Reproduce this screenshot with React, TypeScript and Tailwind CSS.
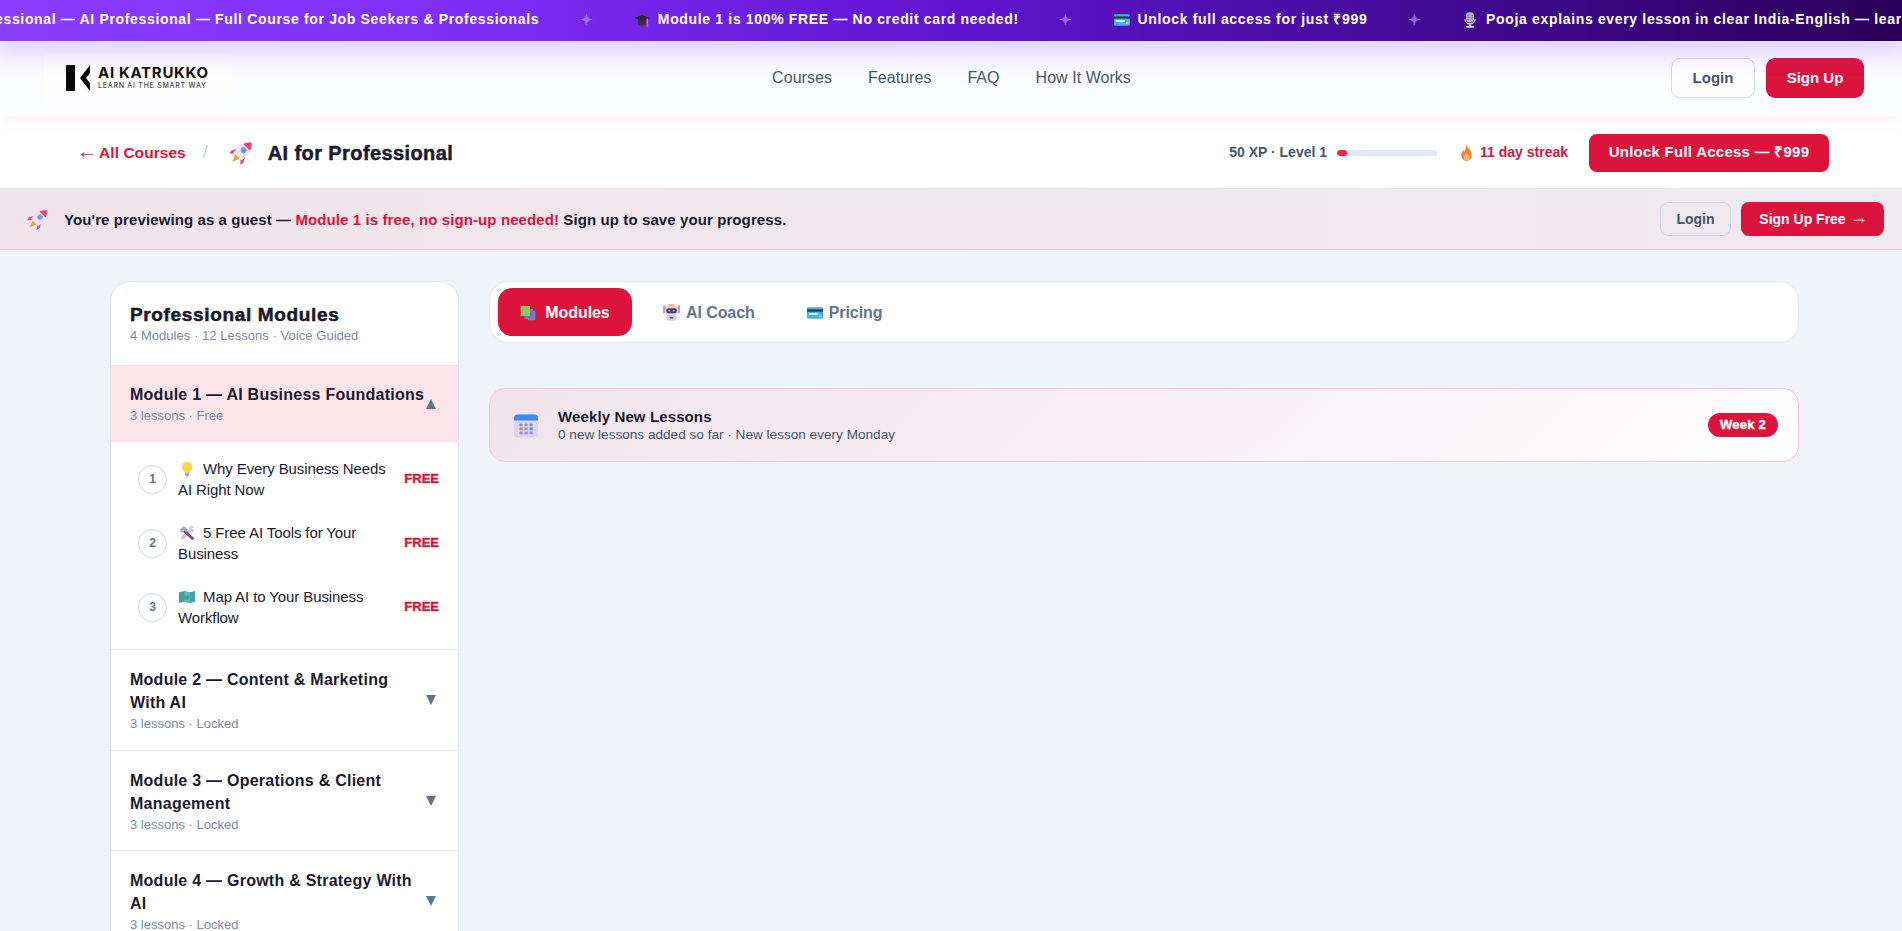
import React from "react";

type IconProps = { className?: string };

const Rocket = ({ className = "w-6 h-6" }: IconProps) => (
  <svg viewBox="0 0 24 24" className={className}>
    <g transform="rotate(45 12 12)">
      <path d="M7 12L3.800 17.500l.7 3.500L8 17.500z" fill="#f43f6e" />
      <path d="M17 12l3.200 5.500-.7 3.500L16 17.500z" fill="#f43f6e" />
      <path d="M9 17h6l-3 7.500z" fill="#f59e2e" />
      <path d="M12-1.500C17.500 3 18.800 9 17.500 17.500h-11C5.200 9 6.500 3 12-1.500z" fill="#ebe3ee" />
      <path d="M12-1.500C14.200.3 15.800 2.500 16.700 5H7.300C8.200 2.500 9.800.3 12-1.500z" fill="#f43f6e" />
      <circle cx="12" cy="9" r="3.100" fill="#b7a9d6" />
      <circle cx="12" cy="9" r="2.200" fill="#5b9bf0" />
    </g>
  </svg>
);

const Cap = ({ className = "w-4 h-4" }: IconProps) => (
  <svg viewBox="0 0 24 24" className={className}>
    <path d="M6 11v7c2 3 10 3 12 0v-7z" fill="#3b3340" />
    <path d="M1 9l11-5 11 5-11 5z" fill="#2a2530" />
    <path d="M20 10v8" stroke="#e88a2c" strokeWidth="2" />
    <rect x="18.800" y="17" width="2.400" height="6" fill="#e8642c" />
  </svg>
);

const Card = ({ className = "w-4 h-4" }: IconProps) => (
  <svg viewBox="0 0 24 24" className={className}>
    <rect x="0" y="3.500" width="24" height="17" rx="2" fill="#38b6e8" />
    <rect x="0" y="6.500" width="24" height="3.500" fill="#2b3a55" />
    <rect x="2.500" y="12" width="14" height="3" fill="#d9f1fb" />
    <rect x="18" y="15.500" width="4" height="2.500" fill="#f6c445" />
  </svg>
);

const Mic = ({ className = "w-4 h-4" }: IconProps) => (
  <svg viewBox="0 0 24 24" className={className}>
    <rect x="6" y="0.500" width="12" height="15" rx="5.500" fill="#b6b3bd" />
    <path d="M6.500 5h11M6.500 8h11M6.500 11h11" stroke="#85828f" strokeWidth="1" />
    <path d="M4.500 11c0 9 15 9 15 0" fill="none" stroke="#c9c6cf" strokeWidth="2.200" />
    <rect x="10.500" y="17" width="3" height="4" fill="#c9c6cf" />
    <rect x="6" y="20.500" width="12" height="3" rx="1" fill="#d8d6dc" />
  </svg>
);

const Flame = ({ className = "w-4 h-4" }: IconProps) => (
  <svg viewBox="0 0 16 20" className={className}>
    <path d="M8 0c.5 3.500 6.500 6.500 6.500 12.500C14.500 16.800 11.500 20 8 20s-6.500-3.200-6.500-7.500C1.500 9.500 3 8 4 6.500c.5 1 1 1.800 1.500 2C6.500 6 7.500 3 8 0z" fill="#f0803c" />
    <path d="M8 9c.5 2 3.500 3.500 3.500 6.500 0 2.500-1.500 4.500-3.500 4.500s-3.500-2-3.500-4.500C4.500 13 7.500 12 8 9z" fill="#fbbf5c" />
  </svg>
);

const Bulb = ({ className = "w-4 h-4" }: IconProps) => (
  <svg viewBox="0 0 24 24" className={className}>
    <path d="M12 1a8 8 0 0 0-4.500 14.600c.8.700 1 1.400 1 2.400h7c0-1 .2-1.700 1-2.400A8 8 0 0 0 12 1z" fill="#fcd34d" />
    <path d="M8 3.500A8 8 0 0 0 7.500 15.600" fill="none" stroke="#fde9a8" strokeWidth="1.500" />
    <rect x="8.800" y="18" width="6.400" height="3.500" rx="1" fill="#a9a4b5" />
    <rect x="10" y="21.500" width="4" height="1.500" rx=".7" fill="#6f6a7a" />
  </svg>
);

const Tools = ({ className = "w-4 h-4" }: IconProps) => (
  <svg viewBox="0 0 24 24" className={className}>
    <path d="M18 4l3 3L8 21l-5 1 1-5z" fill="#c9c4d1" />
    <path d="M9 7l14 13-3 3L6 10z" fill="#7a4a6a" />
    <path d="M1 7l6-5 6 4-2 4-4-2-3 4z" fill="#aaa5b4" />
    <path d="M15 4c2-3 6-3 8-1l-4 3 1 2 3-2c.5 3-2 6-5 5z" fill="#d4d0da" />
  </svg>
);

const MapIcon = ({ className = "w-4 h-4" }: IconProps) => (
  <svg viewBox="0 0 24 24" className={className}>
    <path d="M0 5l8-2 8 2 8-2v16l-8 2-8-2-8 2z" fill="#3a9fc4" />
    <path d="M8 3l8 2v16l-8-2z" fill="#5cb8d6" />
    <path d="M2 9l5-2 3 3 4-1 2 4-3 4-4-2-4 1z" fill="#4ca56f" />
    <path d="M17 8l5-1v6l-4 2z" fill="#4ca56f" />
  </svg>
);

const Books = ({ className = "w-4 h-4" }: IconProps) => (
  <svg viewBox="0 0 24 24" className={className}>
    <rect x="12" y="9" width="11" height="14" fill="#38a0dc" />
    <rect x="6.500" y="6" width="13" height="15" fill="#8f6bb8" />
    <rect x="1" y="1.500" width="14" height="15" fill="#82cf5b" />
  </svg>
);

const Robot = ({ className = "w-4 h-4" }: IconProps) => (
  <svg viewBox="0 0 24 24" className={className}>
    <rect x="0.500" y="2" width="2" height="11" fill="#ef4f7c" />
    <rect x="21.500" y="2" width="2" height="11" fill="#ef4f7c" />
    <rect x="8" y="0.500" width="8" height="3" rx="1" fill="#f2b33d" />
    <rect x="2.500" y="3" width="19" height="12" rx="4" fill="#d9d2e6" />
    <rect x="4.500" y="6" width="15" height="7" rx="3" fill="#3b3f5c" />
    <circle cx="9" cy="9.500" r="1.500" fill="#5fc2f5" />
    <circle cx="15" cy="9.500" r="1.500" fill="#5fc2f5" />
    <rect x="5" y="15.500" width="14" height="8" rx="3" fill="#d7c7ee" />
    <rect x="9.500" y="18.500" width="5" height="1.800" rx=".9" fill="#55506a" />
  </svg>
);

const Calendar = ({ className = "w-6 h-6" }: IconProps) => (
  <svg viewBox="0 0 24 24" className={className}>
    <rect x="0" y="1" width="24" height="23" rx="3.500" fill="#ded3f0" />
    <path d="M0 7V4.500A3.500 3.500 0 0 1 3.500 1h17A3.500 3.500 0 0 1 24 4.500V7z" fill="#3f86ee" />
    {[5.500, 10.500, 15.500].flatMap((x) =>
      [10, 14, 18].map((y) => (
        <rect key={`${x}-${y}`} x={x} y={y} width="3.200" height="2.800" rx=".5" fill={x === 15.500 && y === 14 ? "#3f8ee8" : "#9b93ae"} />
      ))
    )}
  </svg>
);

const Star = () => <span className="mx-[40.500px] text-[15px] text-[#b48cf5] opacity-70 leading-none">✦</span>;

const Item = ({ icon, text }: { icon?: React.ReactNode; text: string }) => (
  <span className="flex items-center gap-[8px]">
    {icon}
    <span>{text}</span>
  </span>
);

const Lesson = ({ n, icon, a, b }: { n: number; icon: React.ReactNode; a: string; b: string }) => (
  <div className="flex items-center h-[64px] pl-[27px] pr-[19px]">
    <div className="w-[29px] h-[29px] rounded-full border border-[#cbd5e1] flex items-center justify-center text-[12px] font-bold text-[#64748b] shrink-0">{n}</div>
    <div className="ml-[11px] flex-1 text-[15px] leading-[21px] tracking-[-0.1px] text-[#1a1a2e]">
      <div className="flex items-center">
        <span className="ml-[1px] mr-[8px]">{icon}</span>
        {a}
      </div>
      <div>{b}</div>
    </div>
    <span className="text-[13px] font-bold text-[#dc143c] [-webkit-text-stroke:0.4px_#dc143c]">FREE</span>
  </div>
);

const Mod = ({ a, b }: { a: string; b: string }) => (
  <div className="relative border-t border-[#e2e8f0] pt-[18px] pl-[19px] pr-[20px] h-[100.500px]">
    <div className="text-[16px] font-bold leading-[23px] tracking-[0.25px] text-[#1a1a2e]">
      {a}
      <br />
      {b}
    </div>
    <div className="text-[13px] leading-[18px] mt-[1px] text-[#7c8aa0]">3 lessons · Locked</div>
    <span className="absolute right-[22px] top-[45px] w-0 h-0 border-l-[5px] border-r-[5px] border-t-[10px] border-l-transparent border-r-transparent border-t-[#64748b]" />
  </div>
);

export default function App() {
  return (
    <div className="h-[931px] overflow-hidden bg-[#f0f3f8] font-['Liberation_Sans',Arial,sans-serif] text-[#1a1a2e]">
      <div className="relative z-30 h-[41px] pb-[2px] overflow-hidden bg-[linear-gradient(90deg,#8a3cff_0%,#7c2ef5_25%,#5f14cf_50%,#430a96_75%,#2a0058_100%)] text-white text-[14px] font-bold tracking-[0.66px] flex items-center whitespace-nowrap">
        <div className="flex items-center -ml-[5px] shrink-0">
          <Item text="essional — AI Professional — Full Course for Job Seekers & Professionals" />
          <Star />
          <Item icon={<Cap className="w-4 h-4" />} text="Module 1 is 100% FREE — No credit card needed!" />
          <Star />
          <Item icon={<Card className="w-4 h-4" />} text="Unlock full access for just ₹999" />
          <Star />
          <Item icon={<Mic className="w-4 h-4" />} text="Pooja explains every lesson in clear India-English — learn anywhere" />
        </div>
      </div>
      <div className="relative z-20 h-0 shadow-[0_0_26px_7px_rgba(124,58,237,0.42)]" />

      <header className="relative z-10 h-[75px] pb-[1px] flex items-center justify-between pl-[44px] pr-[38px] bg-[#fbfcff] shadow-[0_4px_16px_rgba(220,20,60,0.06)]">
        <div className="relative z-20 w-[188px] h-[51px] bg-white/70 flex items-center pl-[22px] gap-[7px]">
          <svg viewBox="0 0 25 26" className="w-[25px] h-[26px]">
            <rect x="0" y="0" width="9" height="26" fill="#0a0a0a" />
            <path d="M14 13L24 0v8l-4 5 4 5v8z" fill="#0a0a0a" />
          </svg>
          <div className="flex flex-col">
            <span className="font-['Inter',sans-serif] text-[15px] font-bold leading-[15px] tracking-[0.7px] text-[#111]">AI KATRUKKO</span>
            <span className="font-['Inter',sans-serif] text-[7px] font-medium tracking-[0.75px] leading-[12px] text-[#444]">LEARN AI THE SMART WAY</span>
          </div>
        </div>
        <nav className="flex items-center gap-[36px] text-[16px] tracking-[0.04px] text-[#4b5563]">
          <span>Courses</span>
          <span>Features</span>
          <span>FAQ</span>
          <span>How It Works</span>
        </nav>
        <div className="flex items-center gap-[11px] text-[15px] font-bold">
          <span className="w-[84px] h-[40px] flex items-center justify-center rounded-[9px] border border-[#d4dae8] text-[#475569] bg-white/70">Login</span>
          <span className="w-[98px] h-[40px] flex items-center justify-center rounded-[9px] bg-[#dc143c] text-white">Sign Up</span>
        </div>
      </header>

      <div className="relative h-[73px] pt-[1px] bg-white border-b border-[#e2e8f0] flex items-center pl-[77px] pr-[73px]">
        <span className="text-[15.500px] font-bold tracking-[0.05px] text-[#dc143c] flex items-center gap-[2px]">
          <span className="text-[20px] leading-none font-normal pb-[4px]">←</span>All Courses
        </span>
        <span className="ml-[17px] text-[#cbd5e1] text-[18px] font-normal">/</span>
        <Rocket className="ml-[21px] w-[25px] h-[25px]" />
        <span className="ml-[14px] text-[20px] font-bold text-[#1a1a2e] tracking-[0.4px] [-webkit-text-stroke:0.5px_#1a1a2e]">AI for Professional</span>
        <div className="ml-auto flex items-center">
          <span className="text-[14px] font-bold text-[#475569]">50 XP · Level 1</span>
          <div className="ml-[10px] w-[100px] h-[6px] rounded-full bg-[#e2e8f0] overflow-hidden">
            <div className="w-[10px] h-full rounded-full bg-[#f0224f]" />
          </div>
          <Flame className="ml-[23px] w-[13px] h-[16px]" />
          <span className="ml-[7px] text-[14px] font-bold text-[#dc143c]">11 day streak</span>
          <span className="ml-[21px] w-[240px] h-[38px] rounded-[8px] bg-[#dc143c] text-white text-[15px] font-bold tracking-[0.25px] flex items-center justify-center">Unlock Full Access — ₹999</span>
        </div>
      </div>

      <div className="h-[61px] border-b border-[#e8c8d4] bg-[linear-gradient(90deg,#f0e4ea,#efeaef)] flex items-center pl-[27px] pr-[18px]">
        <Rocket className="w-[22px] h-[22px]" />
        <span className="ml-[15px] pt-[2px] text-[15px] font-bold tracking-[0.1px] text-[#1a1a2e]">
          You're previewing as a guest — <span className="text-[#dc143c]">Module 1 is free, no sign-up needed!</span> Sign up to save your progress.
        </span>
        <div className="ml-auto flex items-center gap-[10px] text-[14px] font-bold">
          <span className="w-[71px] h-[34px] rounded-[8px] border border-[#ced5e3] text-[#475569] flex items-center justify-center">Login</span>
          <span className="w-[143px] h-[34px] pl-[2px] rounded-[8px] bg-[#dc143c] text-white flex items-center justify-center gap-[4px]">
            Sign Up Free <span className="text-[18px] leading-none font-normal pb-[4px]">→</span>
          </span>
        </div>
      </div>

      <main className="flex items-start gap-[30px] pt-[31px] pl-[110px] pr-[103px]">
        <aside className="w-[349px] shrink-0 bg-white border border-[#e2e8f0] rounded-[20px] overflow-hidden">
          <div className="h-[83px] pt-[20px] pl-[19px]">
            <div className="text-[19px] font-bold leading-[25px] tracking-[0.65px] text-[#1a1a2e] [-webkit-text-stroke:0.55px_#1a1a2e]">Professional Modules</div>
            <div className="text-[13px] leading-[17px] tracking-[0.04px] text-[#7c8aa0]">4 Modules · 12 Lessons · Voice Guided</div>
          </div>
          <div className="relative border-t border-[#e2e8f0] bg-[#fbe5ea] h-[77px] pt-[17px] pl-[19px]">
            <div className="text-[16px] font-bold leading-[23px] tracking-[0.25px] text-[#1a1a2e]">Module 1 — AI Business Foundations</div>
            <div className="text-[13px] leading-[18px] pt-[1px] text-[#7c8aa0]">3 lessons · Free</div>
            <span className="absolute right-[22px] top-[33px] w-0 h-0 border-l-[5px] border-r-[5px] border-b-[10px] border-l-transparent border-r-transparent border-b-[#64748b]" />
          </div>
          <div className="pt-[5px] pb-[10px]">
            <Lesson n={1} icon={<Bulb />} a="Why Every Business Needs" b="AI Right Now" />
            <Lesson n={2} icon={<Tools />} a="5 Free AI Tools for Your" b="Business" />
            <Lesson n={3} icon={<MapIcon />} a="Map AI to Your Business" b="Workflow" />
          </div>
          <Mod a="Module 2 — Content & Marketing" b="With AI" />
          <Mod a="Module 3 — Operations & Client" b="Management" />
          <Mod a="Module 4 — Growth & Strategy With" b="AI" />
        </aside>

        <section className="flex-1 min-w-0">
          <div className="h-[62px] bg-white border border-[#e2e8f0] rounded-[20px] flex items-center pl-[8px] text-[16px] font-bold tracking-[-0.08px]">
            <span className="w-[134px] h-[48px] pt-[1px] rounded-[14px] bg-[#dc143c] text-white flex items-center justify-center gap-[9px]">
              <Books />
              Modules
            </span>
            <span className="ml-[31px] pt-[1px] flex items-center gap-[6px] text-[#64748b]">
              <Robot className="w-[17px] h-[17px]" />
              AI Coach
            </span>
            <span className="ml-[52px] pt-[1px] flex items-center gap-[6px] text-[#64748b]">
              <Card />
              Pricing
            </span>
          </div>
          <div className="mt-[45px] h-[74px] rounded-[16px] border border-[#f5c6d4] bg-[linear-gradient(135deg,#f0e4ea_0%,#f6eef3_45%,#ffffff_100%)] flex items-center pl-[24px] pr-[20px]">
            <Calendar className="w-[24px] h-[25px]" />
            <div className="ml-[20px]">
              <div className="text-[15px] font-bold leading-[19px] text-[#1a1a2e] tracking-[0.12px]">Weekly New Lessons</div>
              <div className="text-[13.600px] leading-[18px] text-[#475569]">0 new lessons added so far · New lesson every Monday</div>
            </div>
            <span className="ml-auto w-[70px] h-[24px] rounded-full bg-[#dc143c] text-white text-[13px] font-bold tracking-[0.2px] flex items-center justify-center [-webkit-text-stroke:0.4px_#fff]">Week 2</span>
          </div>
        </section>
      </main>
    </div>
  );
}
